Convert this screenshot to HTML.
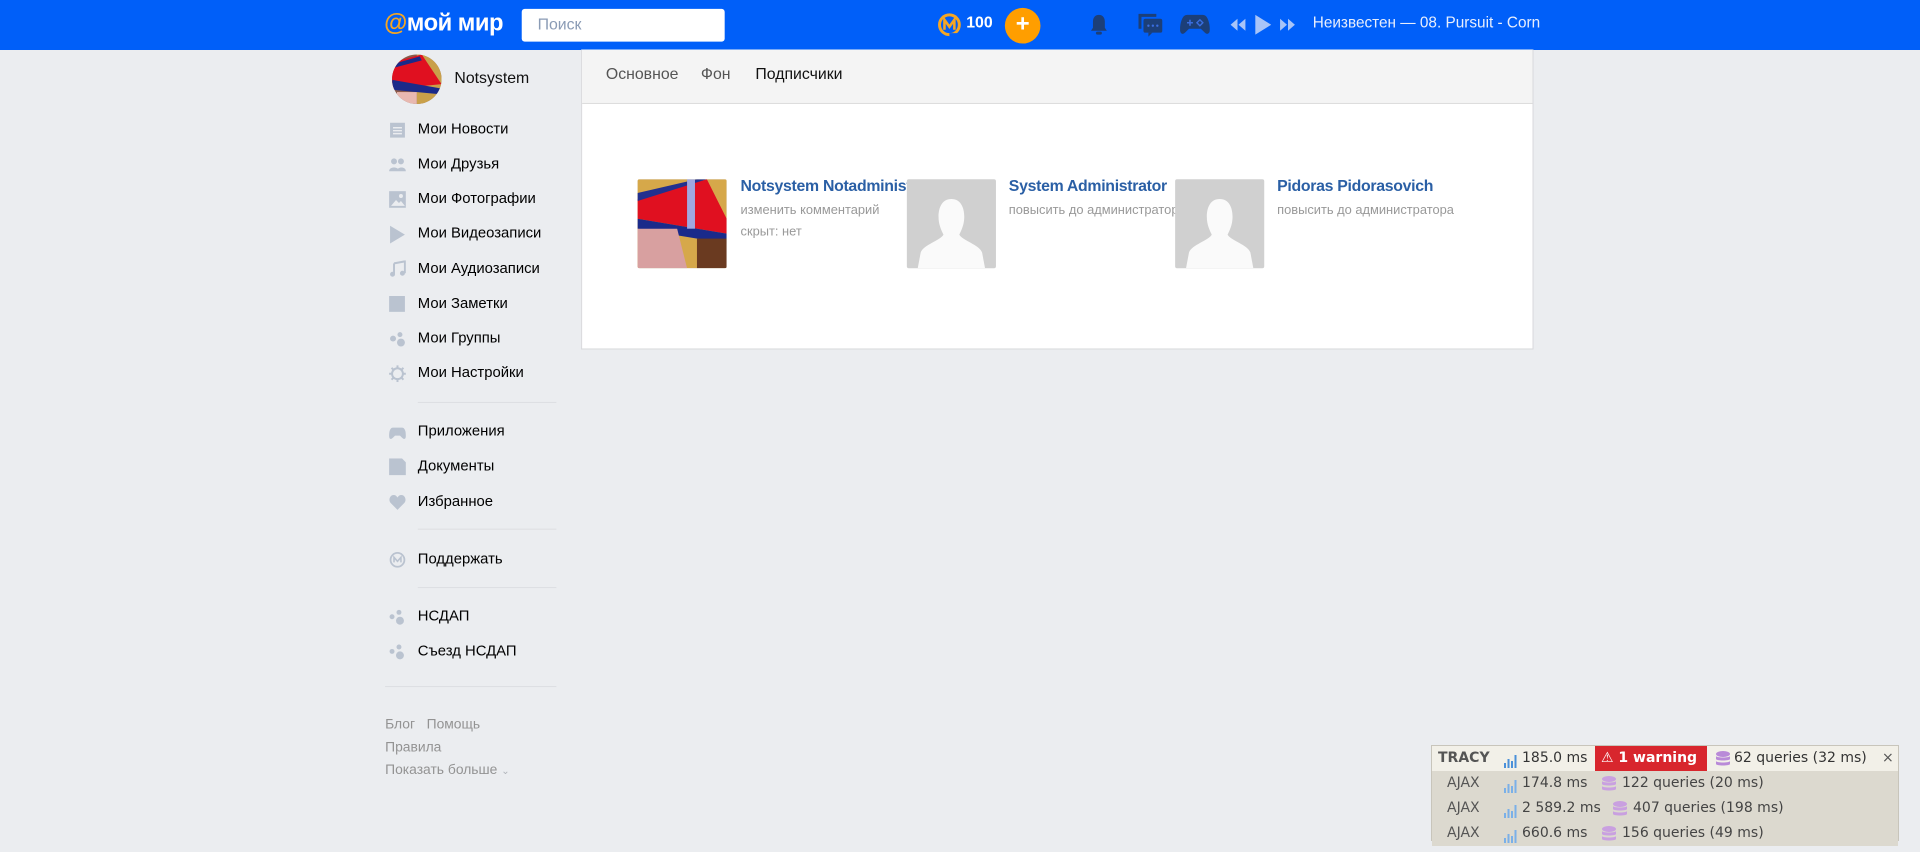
<!DOCTYPE html>
<html><head><meta charset="utf-8"><style>
*{margin:0;padding:0;box-sizing:border-box}
body{width:1920px;height:841px;overflow:hidden;background:#ebedf0;font-family:"Liberation Sans",sans-serif;position:relative}
.abs{position:absolute}
#top{left:0;top:0;width:1920px;height:50px;background:#005ff9}
#w{position:absolute;left:0;top:0;width:1940px;height:850px;transform:scale(0.99);transform-origin:0 0}
.menu div{position:absolute;left:422px;font-size:15px;color:#000;line-height:18px}
.ic{position:absolute;left:393px;width:17px;height:17px}
.sep{position:absolute;height:1px;background:#dcdee2}
.foot{position:absolute;left:389px;font-size:14px;color:#939393}
.tab{position:absolute;top:67px;font-size:16px;color:#555}
.card{position:absolute;top:181px;width:90px;height:90px;background:#d0d0d0;border-radius:2px;overflow:hidden}
.nm{position:absolute;top:180px;font-size:16px;color:#2a5fa5;font-weight:bold;letter-spacing:-0.3px}
.sub{position:absolute;font-size:13px;color:#999}
#tracy{left:1431px;top:745px;width:468px;height:96px;font-family:"DejaVu Sans","Liberation Sans",sans-serif;font-size:14px;color:#333;border:1px solid #c8c5bb}
.row{position:absolute;left:0;width:466px;height:25px;line-height:25px;background:#dcd9cf}
.row span{position:absolute;white-space:nowrap}
</style></head><body>
<div id="top" class="abs"></div>
<div id="w">
<div class="abs" style="left:388px;top:10px;font-size:24px;color:#fff;font-weight:bold;letter-spacing:-0.5px"><span style="color:#f5a623">@</span>мой мир</div>
<div class="abs" style="left:527px;top:9px;width:205px;height:33px;background:#fff;border-radius:3px;font-size:16px;color:#8a9bb5;padding:8px 0 0 16px">Поиск</div>
<svg class="abs" style="left:946px;top:12px" width="26" height="28" viewBox="0 0 26 28"><circle cx="13" cy="13" r="10" fill="none" stroke="#f5a623" stroke-width="3"/><path d="M8 18V8l5 7 5-7v10" fill="none" stroke="#f5a623" stroke-width="2.6"/><path d="M13 23h8" stroke="#005ff9" stroke-width="3"/></svg>
<div class="abs" style="left:976px;top:15px;font-size:16px;font-weight:bold;color:#fff">100</div>
<div class="abs" style="left:1015px;top:8px;width:36px;height:36px;border-radius:50%;background:#ff9e00;color:#fff;font-size:24px;font-weight:bold;text-align:center;line-height:34px">+</div>
<svg class="abs" style="left:1100px;top:13px" width="20" height="24" viewBox="0 0 20 24"><path d="M10 2c-4 0-6 3-6 7v6l-2 3h16l-2-3V9c0-4-2-7-6-7z" fill="#1c3f78"/><rect x="7" y="19" width="6" height="3" rx="1.5" fill="#1c3f78"/></svg>
<svg class="abs" style="left:1148px;top:12px" width="28" height="26" viewBox="0 0 28 26"><path d="M2 2h18v3H5v12H2z" fill="#1c3f78"/><rect x="7" y="7" width="19" height="14" rx="2" fill="#1c3f78"/><path d="M12 21v4l4-4z" fill="#1c3f78"/><circle cx="12" cy="14" r="1.2" fill="#3a6ee0"/><circle cx="16.5" cy="14" r="1.2" fill="#3a6ee0"/><circle cx="21" cy="14" r="1.2" fill="#3a6ee0"/></svg>
<svg class="abs" style="left:1192px;top:13px" width="30" height="24" viewBox="0 0 30 24"><path d="M7 2h16c4 0 6 5 7 12 1 6-2 9-5 6l-4-4H9l-4 4c-3 3-6 0-5-6C1 7 3 2 7 2z" fill="#1c3f78"/><path d="M7 10h6M10 7v6" stroke="#3a6ee0" stroke-width="1.6"/><path d="M20 7l3 3-3 3-3-3z" fill="none" stroke="#3a6ee0" stroke-width="1.4"/></svg>
<svg class="abs" style="left:1241px;top:17px" width="18" height="16" viewBox="0 0 18 16"><path d="M9 2L2 8l7 6zM17 2l-7 6 7 6z" fill="#a8c4f8"/></svg>
<svg class="abs" style="left:1266px;top:13px" width="20" height="24" viewBox="0 0 20 24"><path d="M2 2l16 10L2 22z" fill="#a8c4f8"/></svg>
<svg class="abs" style="left:1292px;top:17px" width="18" height="16" viewBox="0 0 18 16"><path d="M1 2l7 6-7 6zM9 2l7 6-7 6z" fill="#a8c4f8"/></svg>
<div class="abs" style="left:1326px;top:15px;font-size:15.5px;color:#e8eefc">Неизвестен — 08. Pursuit - Corn</div>

<svg class="abs" style="left:396px;top:55px" width="50" height="50" viewBox="0 0 50 50"><defs><clipPath id="c"><circle cx="25" cy="25" r="25"/></clipPath></defs><g clip-path="url(#c)"><rect width="50" height="50" fill="#8a5a4a"/><rect x="25" width="25" height="50" fill="#c9a04a"/><path d="M0 8L30 0 50 30 0 35z" fill="#e01020"/><path d="M0 10l28-8 2 4L0 14z" fill="#1a2a8a"/><path d="M0 30l50 0 0 6-50 4z" fill="#1a2a8a" transform="rotate(10 25 30)"/><rect x="5" y="38" width="20" height="12" fill="#e8b8b0"/></g></svg>
<div class="abs" style="left:459px;top:71px;font-size:16px;color:#111">Notsystem</div>

<div class="menu">
<div style="top:122px">Мои Новости</div><div style="top:157px">Мои Друзья</div><div style="top:192px">Мои Фотографии</div><div style="top:227px">Мои Видеозаписи</div><div style="top:263px">Мои Аудиозаписи</div><div style="top:298px">Мои Заметки</div><div style="top:333px">Мои Группы</div><div style="top:368px">Мои Настройки</div>
<div style="top:427px">Приложения</div><div style="top:462px">Документы</div><div style="top:498px">Избранное</div>
<div style="top:556px">Поддержать</div>
<div style="top:614px">НСДАП</div><div style="top:649px">Съезд НСДАП</div>
</div>
<svg class="ic" style="top:123px" viewBox="0 0 17 17"><rect x="1" y="1" width="15" height="15" fill="#bac3d0"/><path d="M4 6h9M4 9h9M4 12h9" stroke="#ebedf0" stroke-width="1.5"/></svg>
<svg class="ic" style="top:158px" viewBox="0 0 17 17"><circle cx="5" cy="5" r="3" fill="#bac3d0"/><circle cx="12" cy="5" r="3" fill="#bac3d0"/><path d="M0 15c0-5 10-5 10 0zM8 15c0-5 9-5 9 0z" fill="#bac3d0"/></svg>
<svg class="ic" style="top:193px" viewBox="0 0 17 17"><rect x="0" y="0" width="17" height="17" fill="#bac3d0"/><path d="M2 15l5-6 3 3 2-2 4 5z" fill="#ebedf0"/><circle cx="12" cy="5" r="2" fill="#ebedf0"/></svg>
<svg class="ic" style="top:227px;height:20px" viewBox="0 0 17 20"><path d="M1 1l15 9-15 9z" fill="#bac3d0"/></svg>
<svg class="ic" style="top:263px" viewBox="0 0 17 17"><path d="M5 3l11-2v12M5 3v11" stroke="#bac3d0" stroke-width="2" fill="none"/><circle cx="3.5" cy="14" r="2.5" fill="#bac3d0"/><circle cx="13.5" cy="13" r="2.5" fill="#bac3d0"/></svg>
<svg class="ic" style="top:299px" viewBox="0 0 17 17"><rect width="16" height="16" fill="#bac3d0"/></svg>
<svg class="ic" style="top:334px" viewBox="0 0 17 17"><circle cx="4" cy="8" r="3" fill="#bac3d0"/><circle cx="11" cy="4" r="2.5" fill="#bac3d0"/><circle cx="12" cy="12" r="4" fill="#bac3d0"/></svg>
<svg class="ic" style="top:369px" viewBox="0 0 17 17"><circle cx="8.5" cy="8.5" r="5.5" fill="none" stroke="#bac3d0" stroke-width="2"/><path d="M8.5 0v3M8.5 14v3M0 8.5h3M14 8.5h3M2.5 2.5l2 2M12.5 12.5l2 2M2.5 14.5l2-2M12.5 4.5l2-2" stroke="#bac3d0" stroke-width="2"/></svg>
<div class="sep" style="left:422px;top:406px;width:140px"></div>
<svg class="ic" style="top:429px" viewBox="0 0 17 17"><path d="M4 3h9c3 0 4 4 4 8s-2 4-4 2l-2-2H6l-2 2c-2 2-4 2-4-2s1-8 4-8z" fill="#bac3d0"/></svg>
<svg class="ic" style="top:463px" viewBox="0 0 17 17"><path d="M0 0h13l4 4v13H0z" fill="#bac3d0"/></svg>
<svg class="ic" style="top:499px" viewBox="0 0 17 17"><path d="M8.5 16L1.5 9C-1 6 1 1 4.5 1c2 0 3 1 4 2.5C9.5 2 10.5 1 12.5 1 16 1 18 6 15.5 9z" fill="#bac3d0"/></svg>
<div class="sep" style="left:422px;top:534px;width:140px"></div>
<svg class="ic" style="top:557px" viewBox="0 0 17 17"><circle cx="8.5" cy="8.5" r="7" fill="none" stroke="#bac3d0" stroke-width="1.8"/><path d="M5 11V6l3.5 4L12 6v5" fill="none" stroke="#bac3d0" stroke-width="1.6"/></svg>
<div class="sep" style="left:422px;top:593px;width:140px"></div>
<svg class="ic" style="top:615px" viewBox="0 0 17 17"><circle cx="3" cy="8" r="2.5" fill="#bac3d0"/><circle cx="10" cy="3.5" r="2.5" fill="#bac3d0"/><circle cx="11" cy="12" r="4" fill="#bac3d0"/></svg>
<svg class="ic" style="top:650px" viewBox="0 0 17 17"><circle cx="3" cy="8" r="2.5" fill="#bac3d0"/><circle cx="10" cy="3.5" r="2.5" fill="#bac3d0"/><circle cx="11" cy="12" r="4" fill="#bac3d0"/></svg>
<div class="sep" style="left:389px;top:693px;width:173px"></div>
<div class="foot" style="top:723px">Блог&nbsp;&nbsp;&nbsp;Помощь</div>
<div class="foot" style="top:746px">Правила</div>
<div class="foot" style="top:769px">Показать больше <span style="font-size:10px;color:#b0b4ba">&#8964;</span></div>

<div class="abs" style="left:587px;top:50px;width:962px;height:303px;background:#fff;border:1px solid #d7d8db;border-top:none"></div>
<div class="abs" style="left:588px;top:50px;width:960px;height:55px;background:#f4f4f4;border-bottom:1px solid #dcdcdc"></div>
<div class="tab" style="left:612px">Основное</div>
<div class="tab" style="left:708px">Фон</div>
<div class="tab" style="left:763px;color:#111">Подписчики</div>

<div class="card" style="left:644px"><svg width="90" height="90" viewBox="0 0 90 90"><rect width="90" height="90" fill="#d6a84a"/><path d="M0 20L70 0 90 40 90 55 0 40z" fill="#e01020"/><path d="M0 14l60-14h10L0 22z" fill="#22308e"/><path d="M0 40l90 15v10L0 50z" fill="#1a2a8a"/><rect x="50" y="0" width="8" height="50" fill="#a0a8e0"/><path d="M0 50h40l10 40H0z" fill="#d8a0a0"/><rect x="60" y="60" width="30" height="30" fill="#6a3a20"/></svg></div>
<div class="nm" style="left:748px;width:168px;overflow:hidden;white-space:nowrap">Notsystem Notadministrator</div>
<div class="sub" style="left:748px;top:204px">изменить комментарий</div>
<div class="sub" style="left:748px;top:226px">скрыт: нет</div>

<div class="card" style="left:916px"><svg width="90" height="90" viewBox="0 0 90 90"><path d="M45 20c-9 0-13 8-13 18 0 8 3 14 5 18-3 6-20 10-23 18l-3 16h68l-3-16c-3-8-20-12-23-18 2-4 5-10 5-18 0-10-4-18-13-18z" fill="#fafafa"/></svg></div>
<div class="nm" style="left:1019px">System Administrator</div>
<div class="sub" style="left:1019px;top:204px">повысить до администратора</div>
<div class="card" style="left:1187px"><svg width="90" height="90" viewBox="0 0 90 90"><path d="M45 20c-9 0-13 8-13 18 0 8 3 14 5 18-3 6-20 10-23 18l-3 16h68l-3-16c-3-8-20-12-23-18 2-4 5-10 5-18 0-10-4-18-13-18z" fill="#fafafa"/></svg></div>
<div class="nm" style="left:1290px">Pidoras Pidorasovich</div>
<div class="sub" style="left:1290px;top:204px">повысить до администратора</div>
</div>

<div id="tracy" class="abs">
<div class="row" style="top:0;background:#f2f0e8">
<span style="left:6px;font-weight:bold;color:#555">TRACY</span>
<span style="left:72px;top:6px"><svg width="14" height="14"><path d="M1 14V9M4.5 14V5M8 14V7M11.5 14V1" stroke="#4a90d9" stroke-width="2"/></svg></span>
<span style="left:90px">185.0 ms</span>
<span style="left:163px;width:112px;height:25px;background:#d8262d;color:#fff;font-weight:bold;padding-left:6px">&#9888; 1 warning</span>
<span style="left:284px;top:5px"><svg width="14" height="16"><ellipse cx="7" cy="3" rx="7" ry="3" fill="#b98ad8"/><path d="M0 5v3c0 2 14 2 14 0V5c0 2-14 2-14 0zM0 10v3c0 2 14 2 14 0v-3c0 2-14 2-14 0z" fill="#b98ad8"/></svg></span>
<span style="left:302px">62 queries (32 ms)</span>
<span style="left:450px;color:#555">×</span>
</div>
<div class="row" style="top:25px"><span style="left:15px;color:#555">AJAX</span><span style="left:72px;top:6px"><svg width="14" height="14"><path d="M1 14V9M4.5 14V5M8 14V7M11.5 14V1" stroke="#7ab0e8" stroke-width="2"/></svg></span><span style="left:90px;color:#444">174.8 ms</span><span style="left:170px;top:5px"><svg width="14" height="16"><ellipse cx="7" cy="3" rx="7" ry="3" fill="#c9a0e0"/><path d="M0 5v3c0 2 14 2 14 0V5c0 2-14 2-14 0zM0 10v3c0 2 14 2 14 0v-3c0 2-14 2-14 0z" fill="#c9a0e0"/></svg></span><span style="left:190px;color:#444">122 queries (20 ms)</span></div>
<div class="row" style="top:50px"><span style="left:15px;color:#555">AJAX</span><span style="left:72px;top:6px"><svg width="14" height="14"><path d="M1 14V9M4.5 14V5M8 14V7M11.5 14V1" stroke="#7ab0e8" stroke-width="2"/></svg></span><span style="left:90px;color:#444">2 589.2 ms</span><span style="left:181px;top:5px"><svg width="14" height="16"><ellipse cx="7" cy="3" rx="7" ry="3" fill="#c9a0e0"/><path d="M0 5v3c0 2 14 2 14 0V5c0 2-14 2-14 0zM0 10v3c0 2 14 2 14 0v-3c0 2-14 2-14 0z" fill="#c9a0e0"/></svg></span><span style="left:201px;color:#444">407 queries (198 ms)</span></div>
<div class="row" style="top:75px"><span style="left:15px;color:#555">AJAX</span><span style="left:72px;top:6px"><svg width="14" height="14"><path d="M1 14V9M4.5 14V5M8 14V7M11.5 14V1" stroke="#7ab0e8" stroke-width="2"/></svg></span><span style="left:90px;color:#444">660.6 ms</span><span style="left:170px;top:5px"><svg width="14" height="16"><ellipse cx="7" cy="3" rx="7" ry="3" fill="#c9a0e0"/><path d="M0 5v3c0 2 14 2 14 0V5c0 2-14 2-14 0zM0 10v3c0 2 14 2 14 0v-3c0 2-14 2-14 0z" fill="#c9a0e0"/></svg></span><span style="left:190px;color:#444">156 queries (49 ms)</span></div>
</div>
</body></html>
